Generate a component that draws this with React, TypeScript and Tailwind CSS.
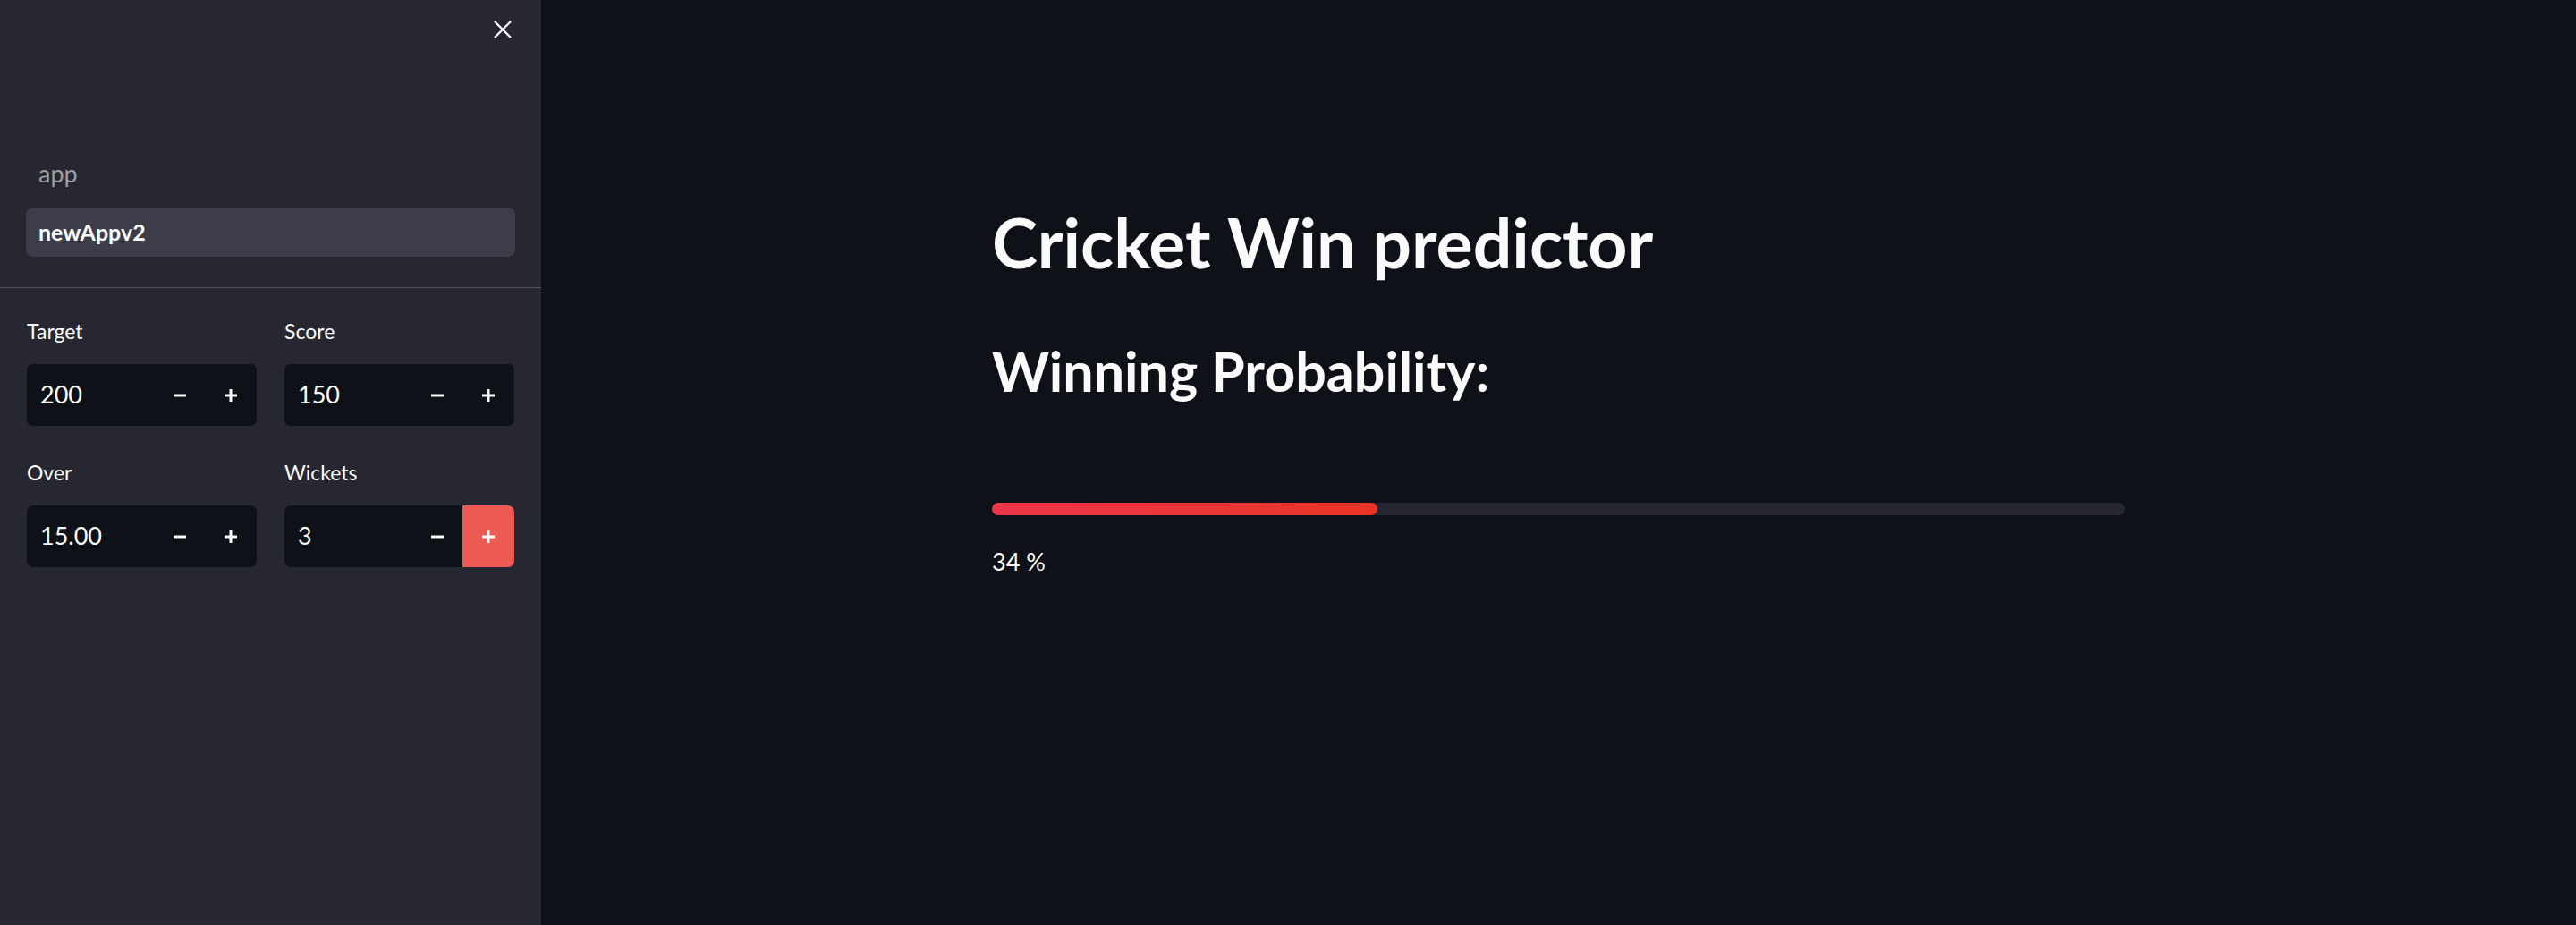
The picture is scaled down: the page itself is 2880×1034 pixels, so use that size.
import type { FC } from "react"

const font = { fontFamily: "Lato, 'Noto Sans', sans-serif" }

const Minus = () => (
  <svg width="16" height="16" viewBox="0 0 16 16">
    <path d="M1 8h14" stroke="#fafafa" strokeWidth="3" />
  </svg>
)

const Plus = () => (
  <svg width="16" height="16" viewBox="0 0 16 16">
    <path d="M1 8h14M8 1v14" stroke="#fafafa" strokeWidth="3" />
  </svg>
)

const NumberInput: FC<{ label: string; value: string; active?: boolean }> = ({
  label,
  value,
  active,
}) => (
  <div className="flex flex-col">
    <label className="h-[23px] text-[23px] leading-none text-[#fafafa]">{label}</label>
    <div className="mt-[25px] flex h-[69px] items-stretch overflow-hidden rounded-[7px] bg-[#0e1117]">
      <div className="flex flex-1 items-center pl-[15px] text-[27px] text-[#fafafa]">{value}</div>
      <button className="flex w-[57px] items-center justify-center">
        <Minus />
      </button>
      <button
        className={
          active
            ? "flex w-[58px] items-center justify-center bg-[#ed5a53]"
            : "flex w-[58px] items-center justify-center"
        }
      >
        <Plus />
      </button>
    </div>
  </div>
)

export default function App() {
  return (
    <div className="flex h-[1034px] w-full bg-[#0e1117]" style={font}>
      <aside className="flex w-[605px] shrink-0 flex-col bg-[#262730]">
        <div className="flex justify-end pr-[33px] pt-[23px]">
          <svg width="20" height="20" viewBox="0 0 20 20">
            <path d="M1 1l18 18M19 1 1 19" stroke="#fafafa" strokeWidth="2.4" />
          </svg>
        </div>
        <nav className="mt-[124px] flex flex-col gap-[10px] px-[29px]">
          <div className="flex h-[55px] items-center px-[14px] text-[27px] text-[#9d9ea3]">app</div>
          <div className="flex h-[55px] items-center rounded-[8px] bg-[#3c3d48] px-[14px] text-[25px] font-bold text-[#fafafa]">
            newAppv2
          </div>
        </nav>
        <div className="mt-[34px] h-px bg-[#55565f]" />
        <div className="grid grid-cols-2 gap-x-[31px] gap-y-[41px] px-[30px] pt-[37px]">
          <NumberInput label="Target" value="200" />
          <NumberInput label="Score" value="150" />
          <NumberInput label="Over" value="15.00" />
          <NumberInput label="Wickets" value="3" active />
        </div>
      </aside>
      <main className="flex-1">
        <div className="mx-auto w-[1267px] pt-[232px] text-[#fafafa]">
          <h1 className="text-[77px] font-bold leading-none">Cricket Win predictor</h1>
          <h2 className="mt-[75px] text-[61px] font-bold leading-none">Winning Probability:</h2>
          <div className="mt-[117px] h-[14px] w-full rounded-full bg-[#262730]">
            <div
              className="h-full rounded-full bg-gradient-to-r from-[#ee3649] to-[#e93424]"
              style={{ width: "34%" }}
            />
          </div>
          <p className="mt-[38px] text-[27px] leading-none">34 %</p>
        </div>
      </main>
    </div>
  )
}
